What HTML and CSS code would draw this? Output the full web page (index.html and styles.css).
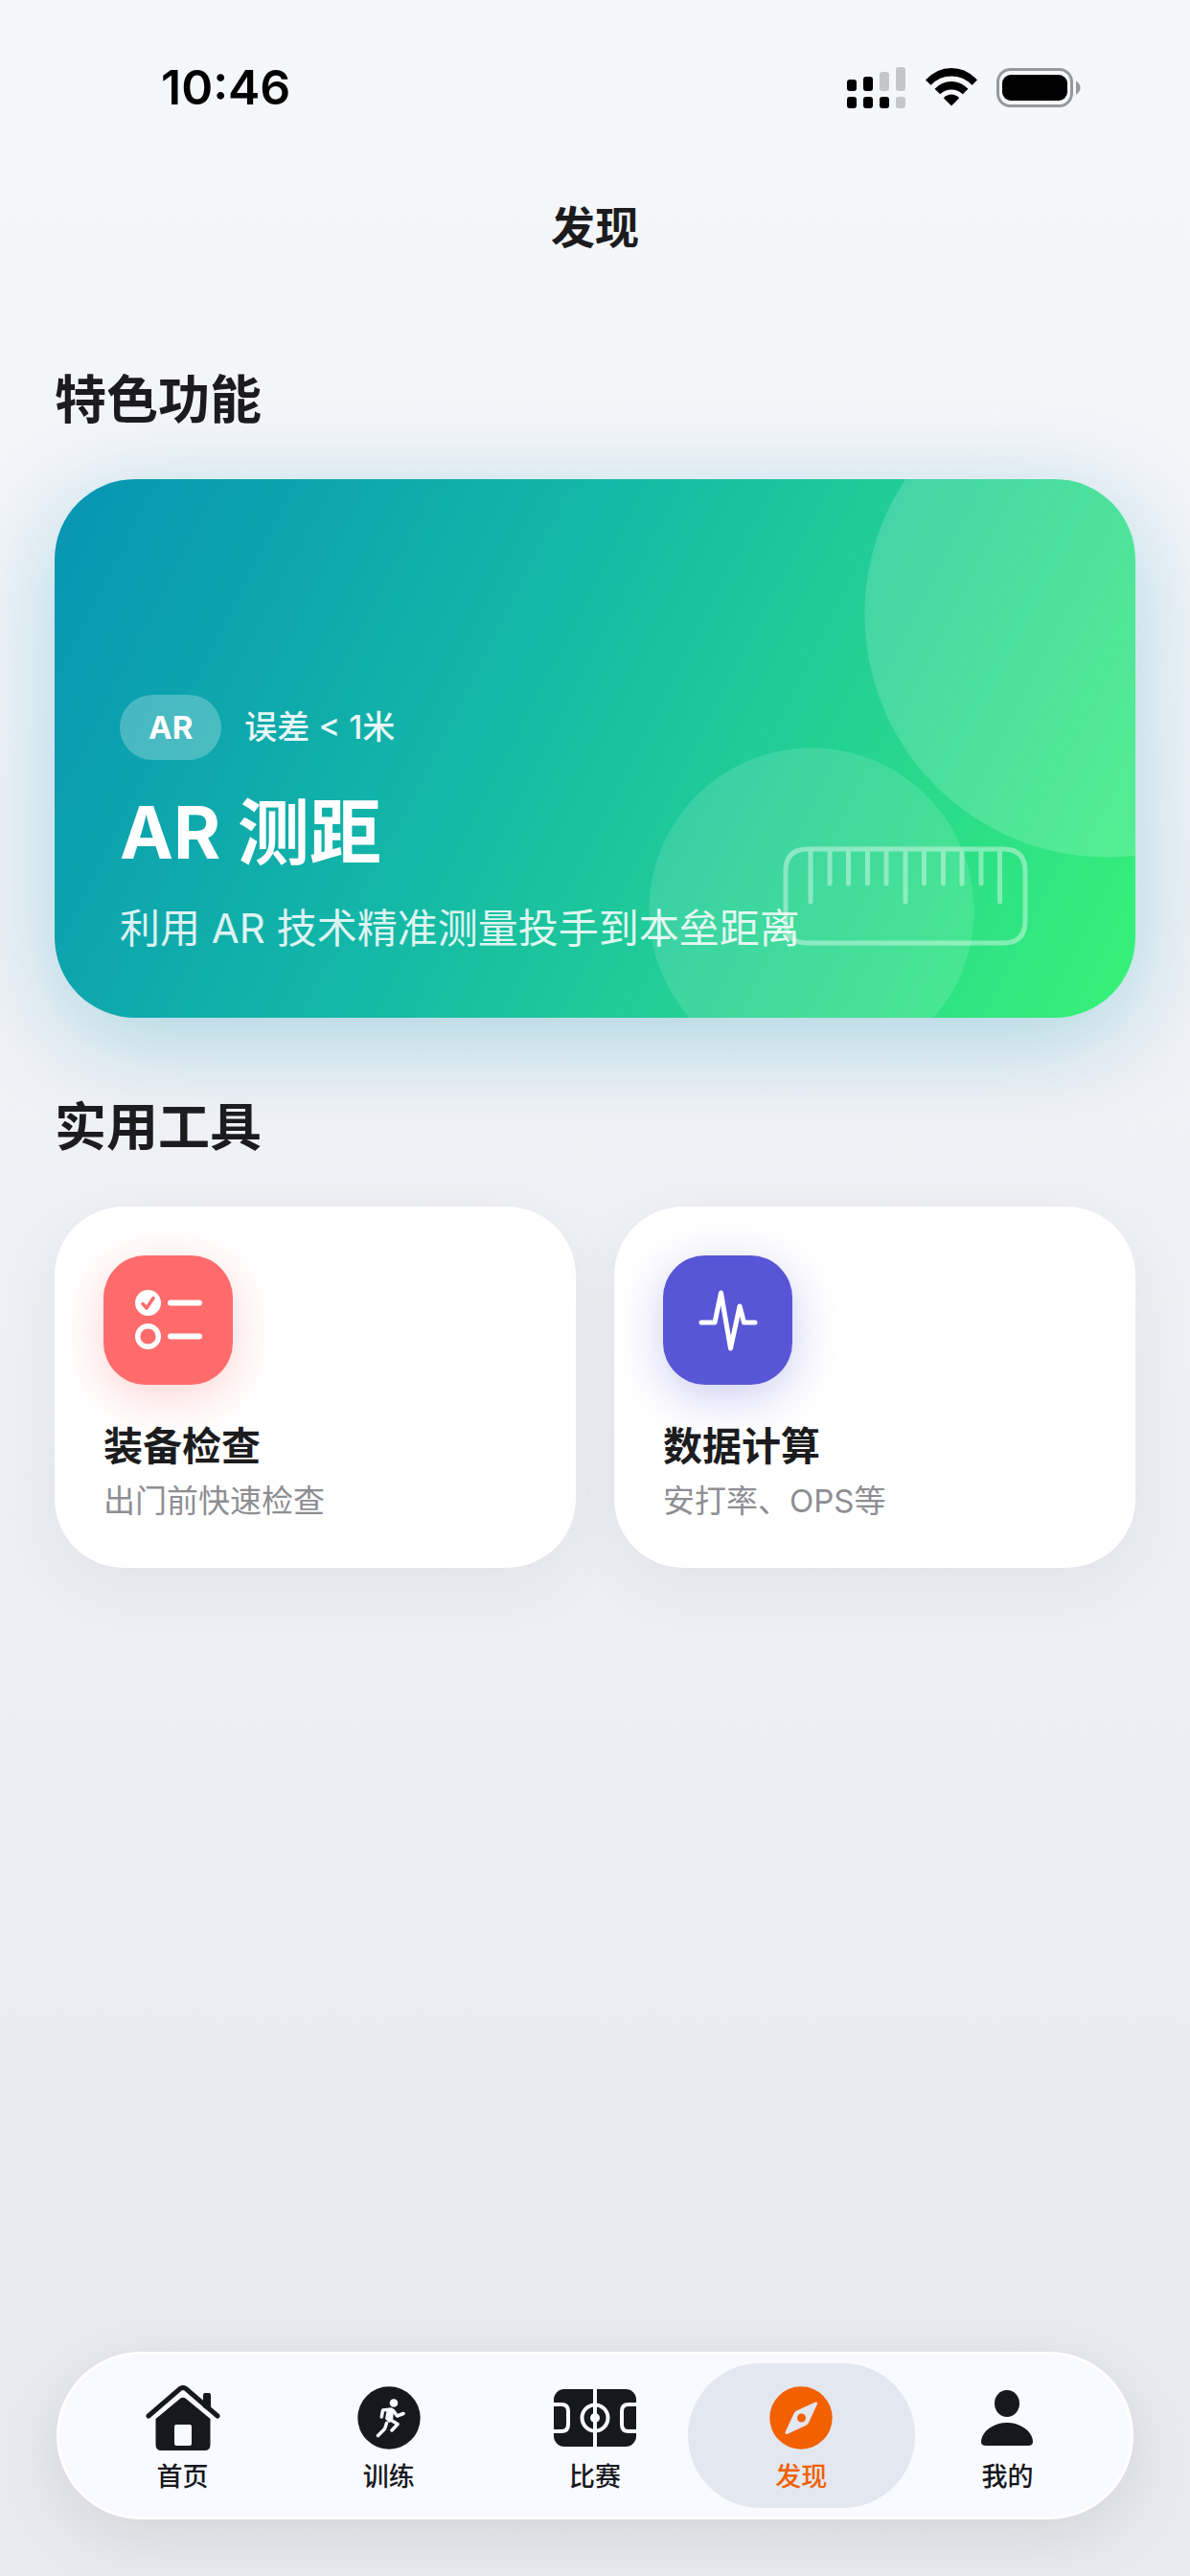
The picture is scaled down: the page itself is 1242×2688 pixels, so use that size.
FILE: index.html
```
<!DOCTYPE html>
<html lang="zh-CN">
<head>
    <meta charset="UTF-8">
    <meta name="viewport" content="width=device-width, initial-scale=1.0">
    <title>发现</title>
    <link rel="stylesheet" href="styles.css">
</head>
<body>

    <div class="status-bar">
        <span class="time">10:46</span>
        <div class="status-icons">
            <svg class="signal" width="62" height="43" viewBox="0 0 62 43">
                <g fill="#000">
                    <rect x="0" y="13" width="10" height="12" rx="3"/>
                    <rect x="17" y="10" width="10" height="15" rx="3"/>
                    <rect x="0" y="31" width="10" height="12" rx="3"/>
                    <rect x="17" y="31" width="10" height="12" rx="3"/>
                    <rect x="34" y="31" width="10" height="12" rx="3"/>
                </g>
                <g fill="#c5c6c8">
                    <rect x="34" y="5" width="10" height="20" rx="3"/>
                    <rect x="51" y="0" width="10" height="25" rx="3"/>
                    <rect x="51" y="31" width="10" height="12" rx="3"/>
                </g>
            </svg>
            <svg class="wifi" width="54" height="40" viewBox="0 0 54 40">
                <path d="M0 12.500Q11.500 0 27 0T54 12.500L48.500 17.800Q39.500 8.500 27 8.500T5.500 17.800Z"/>
                <path d="M9.500 21.700Q17 14 27 14T44.500 21.700L38.800 27.300Q34 22.500 27 22.500T15.200 27.300Z"/>
                <path d="M18.800 31.200Q22.500 27.500 27 27.500T35.200 31.200L27 39.500Z"/>
            </svg>
            <svg class="battery" width="88" height="41" viewBox="0 0 88 41">
                <rect x="1.500" y="1.500" width="77" height="38" rx="13" fill="none" stroke="#97989a" stroke-width="3"/>
                <rect x="6" y="7" width="68" height="27" rx="9"/>
                <path d="M83 13.500Q87.500 16 87.500 20.500T83 27.500Z" fill="#97989a"/>
            </svg>
        </div>
    </div>

    <header class="page-header">
        <h1>发现</h1>
    </header>

    <main>
        <section>
            <h2>特色功能</h2>
            <a class="hero" href="#ar">
                <svg class="ruler" width="256" height="104" viewBox="0 0 256 104" fill="none" stroke="#fff" stroke-linecap="round">
                    <path stroke-width="5" d="M26 3H230Q253 3 253 26V78Q253 101 230 101H26Q3 101 3 78V26Q3 3 26 3ZM29 6V58M49 6V39M68.500 6V39M88.500 6V39M108 6V39M128 6V58M147.500 6V39M167.500 6V39M187 6V39M207 6V39M226.500 6V58"/>
                </svg>
                <span class="hero-meta">
                    <span class="badge">AR</span>
                    <span class="accuracy">误差 &lt; 1米</span>
                </span>
                <span class="hero-title">AR 测距</span>
                <span class="hero-text">利用 AR 技术精准测量投手到本垒距离</span>
            </a>
        </section>

        <section>
            <h2>实用工具</h2>
            <div class="tools">
                <a class="tool" href="#gear">
                    <span class="tool-icon red">
                        <svg width="70" height="64" viewBox="0 0 70 64" fill="none" stroke="#fff" stroke-linecap="round" stroke-linejoin="round">
                            <circle cx="13.500" cy="13.500" r="13.500" fill="#fff" stroke="none"/>
                            <path d="M8 14.500L12 19L19 8.500" stroke="#ff6b6b" stroke-width="3.500"/>
                            <circle cx="13.500" cy="48.500" r="10.800" stroke-width="5.400"/>
                            <path d="M37 13.500H67M37 48.500H67" stroke-width="6"/>
                        </svg>
                    </span>
                    <span class="tool-title">装备检查</span>
                    <span class="tool-text">出门前快速检查</span>
                </a>
                <a class="tool" href="#stats">
                    <span class="tool-icon purple">
                        <svg width="62" height="64" viewBox="0 0 62 64" fill="none" stroke="#fff" stroke-width="5" stroke-linecap="round" stroke-linejoin="round">
                            <path d="M3 34H17L23.500 3L33.500 61L43 17L47.500 34H59"/>
                        </svg>
                    </span>
                    <span class="tool-title">数据计算</span>
                    <span class="tool-text">安打率、OPS等</span>
                </a>
            </div>
        </section>
    </main>

    <nav class="tab-bar">
        <a class="tab" href="#home">
            <svg width="78" height="68" viewBox="0 0 78 68">
                <path d="M3 32L36 3.500Q39 1.500 42 3.500L75 32" fill="none" stroke="#17181d" stroke-width="5" stroke-linecap="round"/>
                <path d="M60 23V10Q60 8 62 8H66Q68 8 68 10V28Z"/>
                <path fill-rule="evenodd" d="M10.500 35L36.500 13.500Q39 12 41.500 13.500L67.500 35V62Q67.500 68 61.500 68H16.500Q10.500 68 10.500 62ZM30 43V61Q30 63 32 63H46Q48 63 48 61V43Q48 41 46 41H32Q30 41 30 43Z"/>
            </svg>
            首页
        </a>
        <a class="tab" href="#training">
            <svg width="66" height="66" viewBox="0 0 66 66">
                <circle cx="33" cy="33" r="32.700"/>
                <circle cx="38" cy="17.500" r="4.300" fill="#f9faff"/>
                <path fill="none" stroke="#f9faff" stroke-width="3.500" stroke-linecap="round" stroke-linejoin="round" d="M25.300 32L26.500 25L35 24L37.500 25.500L41.500 31L48 28.500M34.500 35L42 39.500L36 46M30.500 38.500L28.500 44.500L21.500 51.500"/>
                <path fill="#f9faff" d="M31 23.500L38 24.500L37 36L33 38L29 34Z"/>
            </svg>
            训练
        </a>
        <a class="tab" href="#match">
            <svg width="86" height="60" viewBox="0 0 86 60">
                <rect x="0" y="0" width="86" height="60" rx="11"/>
                <g fill="none" stroke="#f9faff" stroke-width="4">
                    <path d="M43 0V60M0 16H8Q15 16 15 23V37Q15 44 8 44H0M86 16H78Q71 16 71 23V37Q71 44 78 44H86"/>
                    <circle cx="43" cy="30" r="13.500"/>
                </g>
                <circle cx="43" cy="30" r="5" fill="#f9faff"/>
            </svg>
            比赛
        </a>
        <a class="tab active" href="#discover" aria-current="page">
            <svg width="66" height="66" viewBox="0 0 66 66">
                <circle cx="33" cy="33" r="32.700"/>
                <path fill="#e3e7f0" d="M48 16.500Q50.500 16 50 18.500L41 38Q40 40 38 41L18.500 50Q16 50.500 16.500 48L25.500 28.500Q26.500 26.500 28.500 25.500Z"/>
                <circle cx="33.500" cy="33" r="4.500"/>
            </svg>
            发现
        </a>
        <a class="tab" href="#me">
            <svg width="56" height="58" viewBox="0 0 56 58">
                <ellipse cx="28" cy="14" rx="13" ry="14"/>
                <path d="M6 58Q1 58 1 54C1 44 13 34 28 34S55 44 55 54Q55 58 50 58Z"/>
            </svg>
            我的
        </a>
    </nav>

</body>
</html>
```
FILE: styles.css
```
* {
    box-sizing: border-box;
}

body {
    margin: 0;
    min-height: 100vh;
    display: flex;
    flex-direction: column;
    font-family: Inter, "Noto Sans CJK SC", sans-serif;
    color: #1c1c1e;
    background: linear-gradient(#f5f7fb, #e9eaef);
}

a {
    color: inherit;
    text-decoration: none;
}

svg {
    display: block;
    flex: none;
}

.status-bar {
    display: flex;
    justify-content: space-between;
    align-items: center;
    height: 132px;
    padding: 50px 114px 0 168px;
}

.time {
    font-size: 50px;
    font-weight: 600;
    line-height: 60px;
    color: #000;
}

.status-icons {
    display: flex;
    align-items: center;
    gap: 20px;
}

.page-header {
    padding: 72px 57px;
    text-align: center;
}

h1,
h2 {
    margin: 0;
    font-weight: 700;
}

h1 {
    font-size: 46px;
    line-height: 66px;
}

main {
    flex: 1;
    padding: 36px 57px;
}

h2 {
    font-size: 54px;
    line-height: 80px;
    margin-bottom: 42px;
}

section + section {
    margin-top: 75px;
}

.hero {
    position: relative;
    display: flex;
    flex-direction: column;
    justify-content: flex-end;
    min-height: 562px;
    padding: 63px 68px;
    border-radius: 84px;
    color: #fff;
    background:
        radial-gradient(circle at calc(100% - 29px) 141px, rgba(255, 255, 255, 0.16) 253px, transparent 254px),
        radial-gradient(circle at calc(100% - 338px) 450px, rgba(255, 255, 255, 0.12) 169px, transparent 170px),
        linear-gradient(117deg, #0794b4, #14b9a6 42%, #24d292 68%, #38f277);
    box-shadow: 0 24px 100px rgba(8, 150, 180, 0.3);
}

/* ruler illustration behind the caption */
.ruler {
    position: absolute;
    right: 112px;
    bottom: 75px;
    opacity: 0.4;
}

.hero-meta {
    display: flex;
    align-items: center;
    gap: 24px;
    font-size: 33px;
}

.badge {
    padding: 14px 30px;
    border-radius: 35px;
    line-height: 40px;
    font-weight: 700;
    background: rgba(255, 255, 255, 0.25);
}

.accuracy {
    font-size: 34px;
    line-height: 40px;
    font-weight: 500;
    opacity: 0.9;
}

.hero-title {
    margin-top: 26px;
    font-size: 75px;
    font-weight: 700;
    line-height: 100px;
}

.hero-text {
    position: relative;
    margin-top: 20px;
    font-size: 42px;
    line-height: 60px;
    opacity: 0.85;
}

.tools {
    display: grid;
    grid-template-columns: 1fr 1fr;
    gap: 40px;
}

.tool {
    display: flex;
    flex-direction: column;
    padding: 51px 51px 48px;
    border-radius: 72px;
    background: #fff;
    box-shadow: 0 16px 72px rgba(0, 0, 0, 0.06);
}

.tool-icon {
    display: flex;
    align-items: center;
    justify-content: center;
    width: 135px;
    height: 135px;
    border-radius: 44px;
}

.red {
    background: #ff6b6b;
    box-shadow: 0 12px 48px rgba(255, 107, 107, 0.3);
}

.purple {
    background: #5856d6;
    box-shadow: 0 12px 48px rgba(88, 86, 214, 0.3);
}

.tool-title {
    margin-top: 34px;
    font-size: 41px;
    font-weight: 700;
    line-height: 60px;
}

.tool-text {
    margin-top: 5px;
    font-size: 33px;
    line-height: 44px;
    color: #8e8e93;
}

.tab-bar {
    display: flex;
    margin: 0 59px 59px;
    padding: 9px 21px;
    border: 3px solid #fff;
    border-radius: 88px;
    background: #f9faff;
    box-shadow: 0 16px 72px rgba(0, 0, 0, 0.1);
}

.tab {
    flex: 1;
    display: flex;
    flex-direction: column;
    align-items: center;
    margin: 0 -11px;
    height: 151px;
    padding: 14px 0 12px;
    border-radius: 76px;
    font-size: 27px;
    font-weight: 500;
    line-height: 40px;
    color: #17181d;
    fill: #17181d;
}

.tab svg {
    margin: auto;
}

.active {
    color: #f26000;
    fill: #f26000;
    background: #e3e7f0;
}
```
